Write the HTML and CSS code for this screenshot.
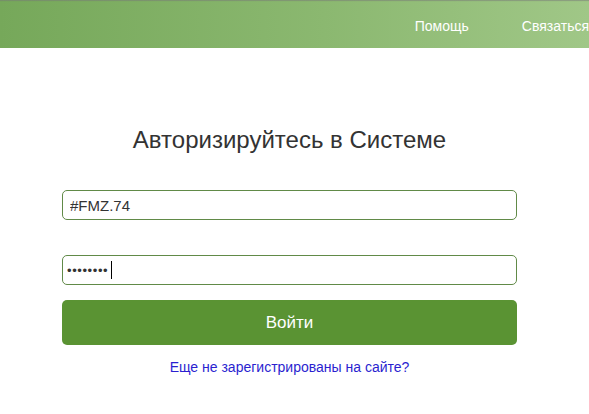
FILE: index.html
```html
<!DOCTYPE html>
<html lang="ru">
<head>
<meta charset="utf-8">
<title>Авторизация</title>
<link rel="stylesheet" href="styles.css">
</head>
<body>
<header class="topbar">
  <nav class="nav">
    <a class="nav-link" href="#">Помощь</a>
    <a class="nav-link" href="#">Связаться</a>
  </nav>
</header>
<main class="login">
  <h1 class="title">Авторизируйтесь в Системе</h1>
  <form class="form">
    <input class="field" type="text" value="#FMZ.74">
    <div class="field-wrap">
      <input class="field field-pass" type="text" value="••••••••">
      <span class="caret"></span>
    </div>
    <button class="btn" type="button">Войти</button>
  </form>
  <a class="reg-link" href="#">Еще не зарегистрированы на сайте?</a>
</main>
</body>
</html>
```

FILE: styles.css
```css
* { box-sizing: border-box; }
html, body { margin: 0; padding: 0; background: #fff; }
body { font-family: "Liberation Sans", Arial, sans-serif; color: #333; }

.topbar {
  height: 48px;
  background: linear-gradient(to right, #76a85a 0%, #8bb870 55%, #a0c787 100%);
  box-shadow: inset 0 2px 1px -1px rgba(120,120,120,0.55);
  display: flex;
  align-items: center;
  justify-content: flex-end;
  overflow: hidden;
}
.nav { display: flex; gap: 53px; margin-right: 0; padding-top: 4px; }
.nav-link {
  color: #fff;
  text-decoration: none;
  font-size: 14px;
  white-space: nowrap;
}

.login {
  width: 455px;
  margin-left: 62px;
  display: flex;
  flex-direction: column;
  align-items: center;
}
.title {
  margin: 78px 0 0;
  font-size: 24px;
  font-weight: normal;
  color: #333;
  line-height: 28px;
}
.form {
  width: 100%;
  margin-top: 36px;
  display: flex;
  flex-direction: column;
}
.field {
  width: 100%;
  height: 30px;
  border: 1px solid #618a48;
  border-radius: 5px;
  padding: 0 7px;
  font-family: "Liberation Sans", Arial, sans-serif;
  font-size: 15px;
  color: #333;
  background: #fff;
  outline: none;
}
.field-wrap { position: relative; margin-top: 35px; }
.field-pass { padding-left: 4px; font-size: 13px; letter-spacing: 0.6px; color: #333; }
.caret {
  position: absolute;
  left: 49px;
  top: 6px;
  width: 1px;
  height: 18px;
  background: #000;
}
.btn {
  margin-top: 15px;
  height: 45px;
  border: none;
  border-radius: 5px;
  background: #5a9333;
  color: #fff;
  font-family: "Liberation Sans", Arial, sans-serif;
  font-size: 17px;
}
.reg-link {
  margin-top: 14px;
  color: #2b1fd0;
  font-size: 14px;
  text-decoration: none;
}
```
